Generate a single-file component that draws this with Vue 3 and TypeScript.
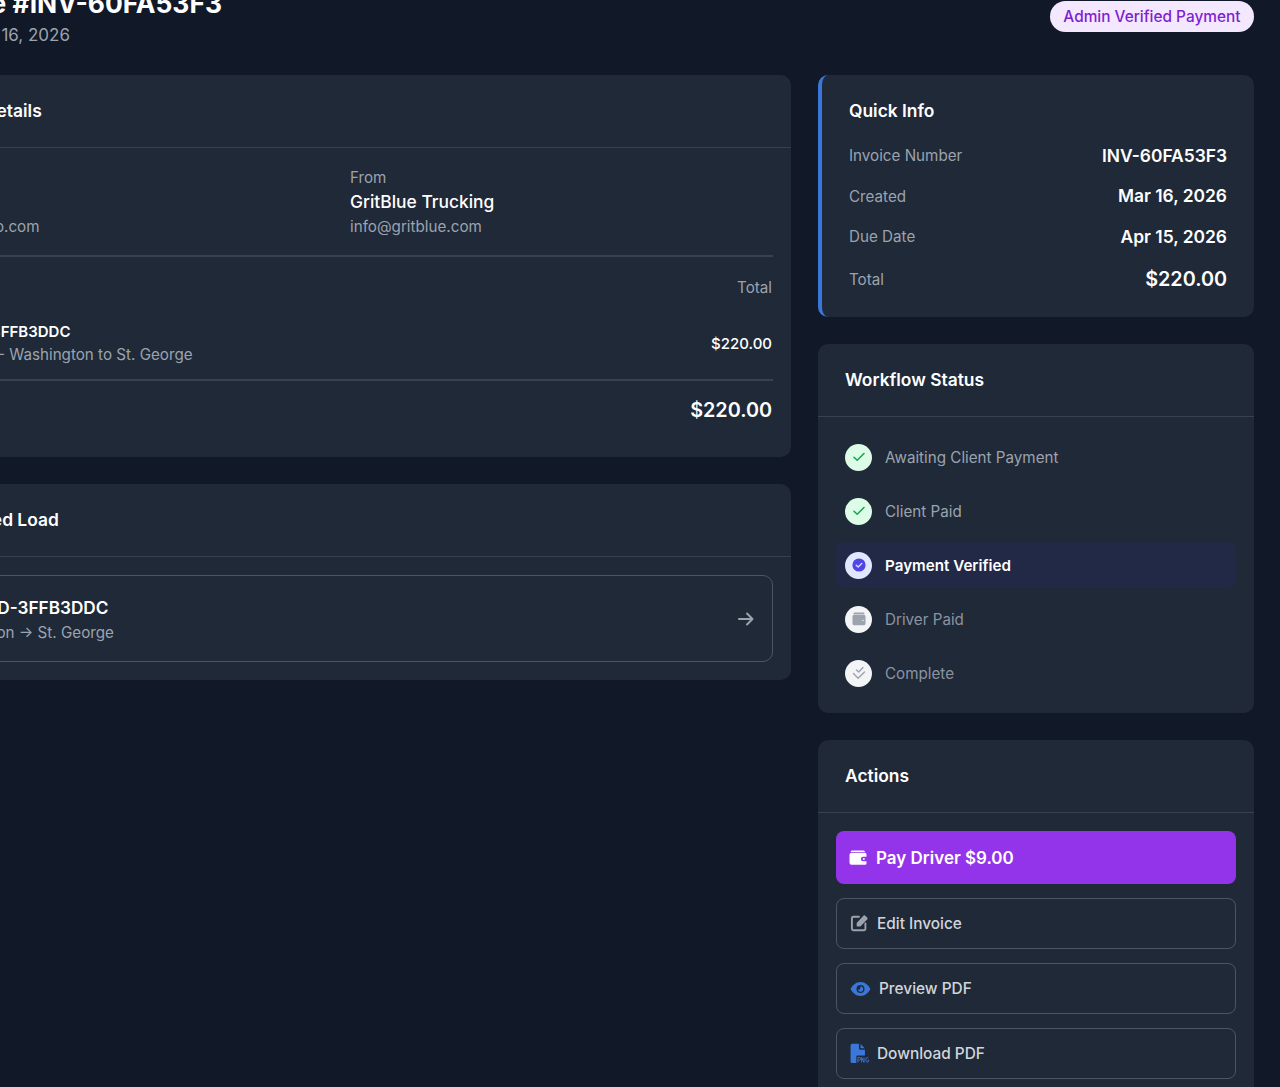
<template>
  <div class="viewport">
    <div class="page">
      <header class="page-head">
        <div>
          <h1>Invoice #INV-60FA53F3</h1>
          <p class="issued">Dated Mar 16, 2026</p>
        </div>
        <span class="status-pill">Admin Verified Payment</span>
      </header>

      <div class="columns">
        <main class="left">
          <section class="card">
            <div class="card-head"><h2>Invoice Details</h2></div>
            <div class="details-body">
              <div class="parties">
                <div class="bill-to">
                  <div class="muted">To</div>
                  <div class="party-name">Acme Co</div>
                  <div class="muted">client@demo.com</div>
                </div>
                <div>
                  <div class="muted">From</div>
                  <div class="party-name">GritBlue Trucking</div>
                  <div class="muted">info@gritblue.com</div>
                </div>
              </div>
              <div class="table-head muted">
                <span>Description</span>
                <span>Total</span>
              </div>
              <div class="line-item">
                <div>
                  <div class="item-name">Load LOAD-3FFB3DDC</div>
                  <div class="muted item-sub">Freight Load - Washington to St. George</div>
                </div>
                <span class="item-total">$220.00</span>
              </div>
              <div class="grand-total">
                <span>Total</span>
                <span>$220.00</span>
              </div>
            </div>
          </section>

          <section class="card">
            <div class="card-head"><h2>Associated Load</h2></div>
            <div class="load-body">
              <div class="load-link">
                <div>
                  <div class="load-id">No. LOAD-3FFB3DDC</div>
                  <div class="muted load-route">Washington → St. George</div>
                </div>
                <svg class="arrow" viewBox="0 0 16 14" fill="none" stroke="currentColor" stroke-width="2" stroke-linecap="round" stroke-linejoin="round">
                  <path d="M1 7h13.500M9 1.500 14.500 7 9 12.500" />
                </svg>
              </div>
            </div>
          </section>
        </main>

        <aside class="right">
          <section class="card quick">
            <h2>Quick Info</h2>
            <div v-for="row in quickInfo" :key="row.label" class="quick-row" :class="{ big: row.big }">
              <span class="muted">{{ row.label }}</span>
              <strong>{{ row.value }}</strong>
            </div>
          </section>

          <section class="card">
            <div class="card-head"><h2>Workflow Status</h2></div>
            <div class="steps">
              <div v-for="step in steps" :key="step.label" class="step" :class="step.state">
                <span class="step-icon">
                  <svg v-if="step.icon === 'check'" viewBox="0 0 16 16" fill="none" stroke="#16a34a" stroke-width="1.500" stroke-linecap="round" stroke-linejoin="round"><path d="m3 8.300 3.200 3L13 4.500" /></svg>
                  <svg v-else-if="step.icon === 'verified'" viewBox="0 0 16 16"><circle cx="8" cy="8" r="6.600" fill="#4f46e5" /><path d="m5.200 8.200 2 1.800 3.600-3.600" fill="none" stroke="#dfe3ff" stroke-width="1.300" stroke-linecap="round" stroke-linejoin="round" /></svg>
                  <svg v-else-if="step.icon === 'wallet'" viewBox="0 0 16 16"><path d="M3.600 1.600h8.800a1 1 0 0 1 1 1v.6H2.400a1.300 1.300 0 0 1 1.200-1.600Z" fill="#9ca3af" /><rect x="1.500" y="3.800" width="13" height="10.400" rx="1.600" fill="#9ca3af" /><circle cx="12" cy="9.400" r=".7" fill="#f3f4f6" /></svg>
                  <svg v-else viewBox="0 0 16 16" fill="none" stroke="#9ca3af" stroke-width="1.400" stroke-linecap="round" stroke-linejoin="round"><path d="m5.500 5 2.200 2L12 2.600M2.500 8.600l4.600 4.600L13.500 7" /></svg>
                </span>
                <span>{{ step.label }}</span>
              </div>
            </div>
          </section>

          <section class="card">
            <div class="card-head"><h2>Actions</h2></div>
            <div class="actions">
              <button class="btn-pay">
                <svg viewBox="0 0 18 16" class="pay-icon"><path d="M3 .5h11.500A1.500 1.500 0 0 1 16 2H1.600A2 2 0 0 1 3 .5Z" fill="#fff" /><path d="M2.500 2.800h13.500a1.500 1.500 0 0 1 1.500 1.500v2.400h-3.300a2.300 2.300 0 0 0 0 4.600h3.300v2a1.500 1.500 0 0 1-1.500 1.500H2.500A2 2 0 0 1 .5 12.800v-8a2 2 0 0 1 2-2Z" fill="#fff" /><circle cx="14.800" cy="9" r="1" fill="#fff" /></svg>
                Pay Driver $9.00
              </button>
              <button class="btn-outline">
                <svg viewBox="0 0 18 18" class="btn-icon" fill="none" stroke="#9ca3af" stroke-width="1.800" stroke-linecap="round" stroke-linejoin="round"><path d="M8.500 3.600H3.200a1.400 1.400 0 0 0-1.400 1.400v10a1.400 1.400 0 0 0 1.400 1.400h10a1.400 1.400 0 0 0 1.400-1.400V9.800" /><path d="M7.200 9.800v2.200h2.200l6.400-6.800-2.200-2.200Z" fill="#9ca3af" /></svg>
                Edit Invoice
              </button>
              <button class="btn-outline eye">
                <svg viewBox="0 0 21 16" class="eye-icon"><path d="M10.500 1C5.800 1 2.200 4.400.6 8c1.600 3.600 5.200 7 9.900 7s8.300-3.400 9.900-7c-1.600-3.600-5.200-7-9.900-7Z" fill="#3b76d9" /><circle cx="10.500" cy="8" r="4" fill="#1f2937" /><path d="M10.500 5.200a2.800 2.800 0 1 1-2.700 3.600c1.500.3 3-1.200 2.700-3.600Z" fill="#3b76d9" /></svg>
                Preview PDF
              </button>
              <button class="btn-outline">
                <svg viewBox="0 0 18 20" class="file-icon"><path d="M2 .8h6.500v4.400a1.300 1.300 0 0 0 1.300 1.300h4.400V12H7a1 1 0 0 0-1 1v6H2a1.500 1.500 0 0 1-1.500-1.500V2.300A1.500 1.500 0 0 1 2 .8Z" fill="#3b76d9" /><path d="M10 1l4 4h-4Z" fill="#3b76d9" /><path d="M7.500 18.500v-4.800h1.300a1.200 1.200 0 0 1 0 2.600H7.500M11 18.500v-4.800l2.300 4.800v-4.800M17.500 14.300a1.400 1.400 0 0 0-2.400 1v1.500a1.400 1.400 0 0 0 2.400 1v-1.400h-1" fill="none" stroke="#3b76d9" stroke-width=".9" /></svg>
                Download PDF
              </button>
            </div>
          </section>
        </aside>
      </div>
    </div>
  </div>
</template>

<script setup lang="ts">
interface QuickRow {
  label: string
  value: string
  big?: boolean
}

interface Step {
  label: string
  state: string
  icon: string
}

const quickInfo: QuickRow[] = [
  { label: 'Invoice Number', value: 'INV-60FA53F3' },
  { label: 'Created', value: 'Mar 16, 2026' },
  { label: 'Due Date', value: 'Apr 15, 2026' },
  { label: 'Total', value: '$220.00', big: true }
]

const steps: Step[] = [
  { label: 'Awaiting Client Payment', state: 'done', icon: 'check' },
  { label: 'Client Paid', state: 'done', icon: 'check' },
  { label: 'Payment Verified', state: 'current', icon: 'verified' },
  { label: 'Driver Paid', state: 'todo', icon: 'wallet' },
  { label: 'Complete', state: 'todo', icon: 'double' }
]
</script>

<style>
html,
body {
  margin: 0;
  background: #111827;
  overflow: hidden;
}
</style>

<style scoped>
.viewport {
  width: 1280px;
  height: 1087px;
  overflow: hidden;
  background: #111827;
  font-family: Inter, "Noto Sans", sans-serif;
  color: #fff;
}

.page {
  width: 1368px;
  margin: -9px 0 0 -114px;
}

.page-head {
  display: flex;
  justify-content: space-between;
  align-items: flex-start;
  height: 84px;
  padding-left: 27px;
}

h1 {
  margin: -3px 0 0;
  font-size: 26.4px;
  line-height: 30px;
  font-weight: 700;
  white-space: nowrap;
}

.issued {
  margin: 5px 0 0;
  font-size: 17px;
  line-height: 24px;
  color: #9ca3af;
}

.status-pill {
  margin: 10px 0 0;
  padding: 0 13.500px;
  height: 31px;
  display: flex;
  align-items: center;
  border-radius: 16px;
  background: #f3e8ff;
  color: #7e22ce;
  font-size: 15.400px;
  font-weight: 500;
}

.columns {
  display: grid;
  grid-template-columns: 905px 436px;
  gap: 27px;
  align-items: start;
}

.left,
.right {
  display: flex;
  flex-direction: column;
  gap: 27px;
}

.card {
  background: #1f2937;
  border-radius: 10px;
}

.card-head {
  padding: 0 27px 2px;
  height: 73px;
  box-sizing: border-box;
  display: flex;
  align-items: center;
  border-bottom: 1px solid #374151;
}

.left .card-head {
  padding-left: 33px;
}

h2 {
  margin: 0;
  font-size: 17.400px;
  font-weight: 600;
  white-space: nowrap;
}

.muted {
  color: #9ca3af;
  font-size: 15.200px;
  line-height: 20px;
}

.details-body {
  padding: 20px 18px 35px;
}

.parties {
  display: grid;
  grid-template-columns: 1fr 1fr;
  gap: 23px;
  padding-bottom: 18px;
  border-bottom: 2px solid #374151;
}

.bill-to {
  padding-left: 6px;
}

.party-name {
  font-size: 17.400px;
  font-weight: 500;
  line-height: 27px;
  margin-bottom: 2px;
}

.table-head {
  display: flex;
  justify-content: space-between;
  padding: 21px 1px 0 0;
}

.line-item {
  display: flex;
  justify-content: space-between;
  align-items: center;
  padding: 24px 1px 14px 0;
  border-bottom: 2px solid #374151;
}

.item-name {
  font-size: 15px;
  font-weight: 600;
  line-height: 20px;
}

.item-sub {
  margin-top: 3px;
}

.item-total {
  font-size: 15px;
  font-weight: 500;
}

.grand-total {
  display: flex;
  justify-content: space-between;
  padding: 17px 1px 0 0;
  font-size: 19.800px;
  font-weight: 600;
  line-height: 24px;
}

.load-body {
  padding: 18px;
}

.load-link {
  display: flex;
  justify-content: space-between;
  align-items: center;
  height: 87px;
  box-sizing: border-box;
  padding: 2px 18px 0 25px;
  border: 1px solid #4b5563;
  border-radius: 10px;
}

.load-id {
  font-size: 17.200px;
  font-weight: 600;
  line-height: 24px;
}

.load-route {
  margin-top: 3px;
}

.arrow {
  width: 16px;
  height: 14px;
  color: #9ca3af;
  margin-top: -2px;
}

.quick {
  border-left: 4px solid #3b76d9;
  padding: 24px 27px 17px;
  height: 242px;
  box-sizing: border-box;
}

.quick h2 {
  line-height: 24px;
  margin-bottom: 13px;
}

.quick-row {
  display: flex;
  justify-content: space-between;
  align-items: center;
  height: 40.500px;
}

.quick-row.big {
  margin-top: 2px;
}

.quick-row strong {
  font-size: 17.400px;
  font-weight: 600;
  margin-top: -2px;
}

.quick-row.big strong {
  font-size: 19.800px;
}

.steps {
  display: flex;
  flex-direction: column;
  gap: 8px;
  padding: 17px 18px;
}

.step {
  display: flex;
  align-items: center;
  gap: 13px;
  height: 46px;
  padding: 0 9px;
  border-radius: 8px;
  font-size: 15.200px;
  color: #9ca3af;
}

.step.current {
  background: #212946;
  color: #fff;
  font-weight: 600;
}

.step.todo {
  color: #8b93a1;
}

.step-icon {
  width: 27px;
  height: 27px;
  border-radius: 50%;
  display: flex;
  align-items: center;
  justify-content: center;
  background: #f3f4f6;
}

.step-icon svg {
  width: 16px;
  height: 16px;
}

.step.done .step-icon {
  background: #dcfce7;
}

.step.current .step-icon {
  background: #e0e7ff;
}

.actions {
  display: flex;
  flex-direction: column;
  gap: 14px;
  padding: 18px;
}

button {
  display: flex;
  align-items: center;
  width: 100%;
  box-sizing: border-box;
  border-radius: 8px;
  font-family: inherit;
  cursor: pointer;
}

.btn-pay {
  height: 53px;
  gap: 9px;
  padding: 0 13px;
  border: none;
  background: #9333ea;
  color: #fff;
  font-size: 17px;
  font-weight: 600;
}

.pay-icon {
  width: 18px;
  height: 16px;
}

.btn-outline {
  height: 51px;
  gap: 8px;
  padding: 0 13px;
  border: 1px solid #4b5563;
  background: transparent;
  color: #d1d5db;
  font-size: 15.400px;
  font-weight: 500;
}

.btn-icon {
  width: 19px;
  height: 19px;
  margin-top: -2px;
}

.eye-icon {
  width: 21px;
  height: 16px;
}

.file-icon {
  width: 19px;
  height: 21px;
}
</style>
